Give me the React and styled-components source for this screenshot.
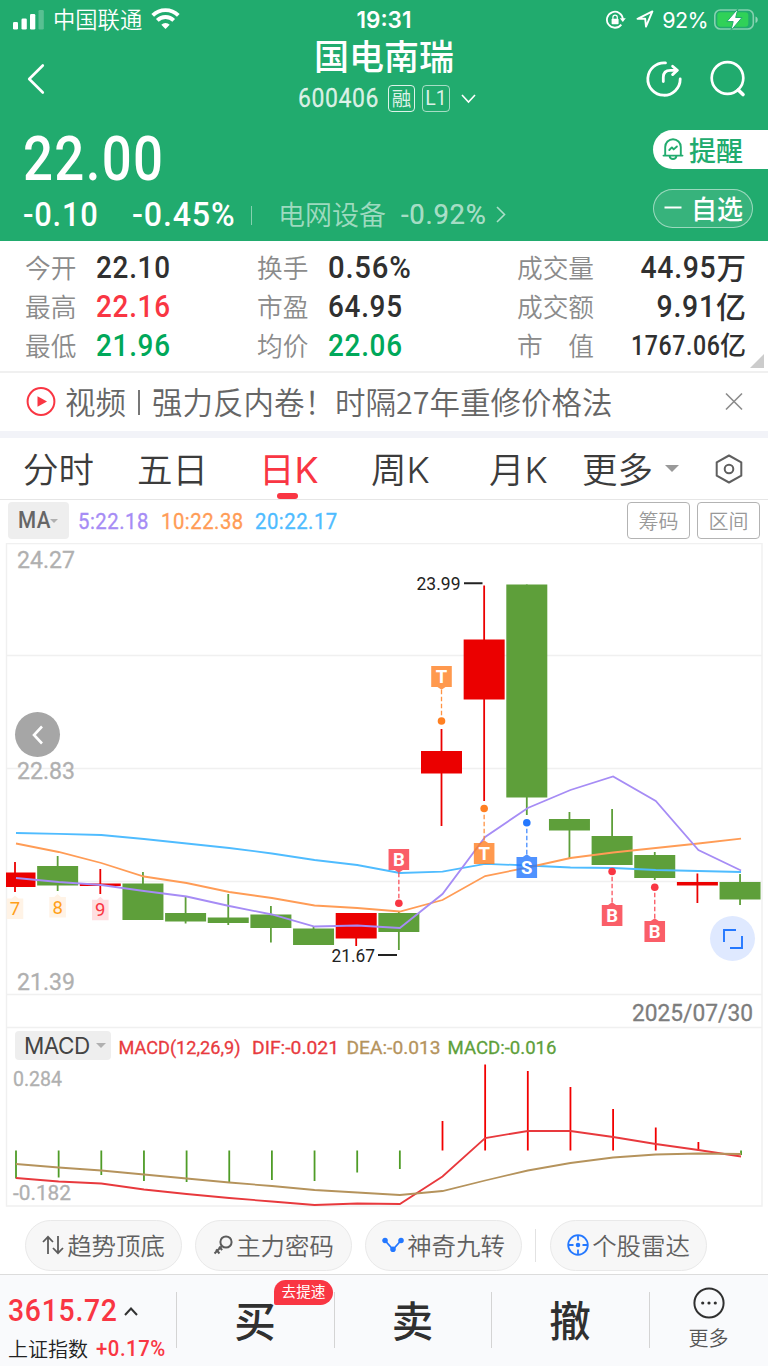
import React from "react";
import styled, { createGlobalStyle } from "styled-components";

const colors = {
  green: "#21ab6e",
  red: "#f93643",
  up: "#eb0000",
  down: "#5e9f3a",
  ink: "#303030",
  gray: "#8b8b8b",
  line: "#f0f0f0",
  purple: "#a68cf5",
  orange: "#ff9c56",
  blue: "#4fbcff",
  tan: "#b5935c",
};

const GlobalStyle = createGlobalStyle`
  * { box-sizing: border-box; }
  body {
    margin: 0;
    background: #fff;
    font-family: "Noto Sans CJK SC", sans-serif;
    -webkit-font-smoothing: antialiased;
  }
  svg { display: block; flex: none; }
`;

const Screen = styled.div`
  width: 768px;
  height: 1366px;
  overflow: hidden;
  display: flex;
  flex-direction: column;
`;

/* narrow DIN style figures */
const Num = styled.span`
  display: block;
  flex: none;
  width: ${(p) => (p.$w ? p.$w + "px" : "auto")};
  font-family: Roboto, "Noto Sans CJK SC", sans-serif;
  font-size: ${(p) => p.$size}px;
  font-weight: ${(p) => p.$weight || 500};
  line-height: 1;
  letter-spacing: 0.026em;
  white-space: nowrap;
  color: ${(p) => p.$color || "inherit"};
  -webkit-text-stroke: ${(p) => p.$stroke || 0}px;
  transform: scaleX(${(p) => p.$sx || 0.9});
  transform-origin: ${(p) => (p.$right ? "right" : "left")} center;
`;

const Header = styled.header`
  height: 241px;
  flex: none;
  background: ${colors.green};
  color: #fff;
`;

const StatusBar = styled.div`
  height: 39px;
  display: grid;
  grid-template-columns: 1fr 62px 1fr;
  align-items: center;
  padding: 0 9px 0 13px;
`;

const StatusSide = styled.div`
  display: flex;
  align-items: center;
  justify-content: ${(p) => (p.$end ? "flex-end" : "flex-start")};
  gap: ${(p) => p.$gap}px;
  font-size: 22.3px;
  font-weight: 350;
  line-height: 36px;
`;

const StatusIcons = styled.div`
  display: flex;
  gap: 10px;
`;

const Carrier = styled.span`
  margin-top: -3px;
`;

const Clock = styled.div`
  margin-left: -4px;
  font: 600 22.5px/38px Inter, sans-serif;
  text-align: center;
`;

const Battery = styled.span`
  margin-left: 2px;
  font: 400 21.5px/38px Inter, sans-serif;
  letter-spacing: -0.6px;
`;

const Nav = styled.div`
  height: 82px;
  display: grid;
  grid-template-columns: 160px 1fr 160px;
`;

const NavIcons = styled.div`
  display: flex;
  align-items: center;
  justify-content: ${(p) => (p.$end ? "flex-end" : "flex-start")};
  gap: 26px;
  padding: 0 ${(p) => (p.$end ? 21 : 27)}px;
  height: 79px;
`;

const Title = styled.h1`
  margin: 0;
  height: 37px;
  font-family: Roboto, "Noto Sans CJK SC", sans-serif;
  font-size: 35px;
  font-weight: 500;
  line-height: 39px;
  text-align: center;
`;

const CodeRow = styled.div`
  display: flex;
  align-items: center;
  height: 45px;
  padding-left: 138px;
`;

const Tag = styled.span`
  width: ${(p) => p.$w}px;
  height: 27px;
  margin-right: 7px;
  border: 1px solid rgba(255, 255, 255, ${(p) => (p.$dim ? 0.6 : 0.85)});
  border-radius: 4px;
  font-size: 19.5px;
  font-family: ${(p) => (p.$dim ? "Roboto" : "Noto Sans CJK SC")}, sans-serif;
  line-height: ${(p) => (p.$dim ? 26 : 24)}px;
  text-align: center;
  color: rgba(255, 255, 255, 0.85);
`;

const Quote = styled.div`
  display: flex;
  justify-content: space-between;
  height: 120px;
`;

const QuoteMain = styled.div`
  padding-left: 23px;
`;

const Price = styled.div`
  display: flex;
  align-items: center;
  height: 77px;
`;

const ChangeRow = styled.div`
  display: flex;
  align-items: center;
  height: 34px;
`;

const Split = styled.i`
  width: 1px;
  height: ${(p) => p.$h}px;
  background: ${(p) => p.$color};
  margin-right: ${(p) => p.$mr || 0}px;
`;

const Sector = styled.span`
  width: 123px;
  font-size: 27px;
  font-weight: 350;
  line-height: 34px;
  margin-top: -2px;
  color: rgba(255, 255, 255, 0.58);
`;

const QuoteActions = styled.div`
  width: 115px;
  padding-top: 9px;
  display: flex;
  flex-direction: column;
  gap: 20px;
`;

const RemindButton = styled.div`
  height: 39px;
  display: flex;
  align-items: center;
  padding-left: 9px;
  gap: 5px;
  border-radius: 20px 0 0 20px;
  background: #fff;
  color: ${colors.green};
  font-size: 27px;
  font-weight: 500;
  line-height: 38px;
`;

const WatchButton = styled.div`
  width: 100px;
  height: 39px;
  display: flex;
  align-items: center;
  padding: 0 0 2px 10px;
  gap: 9px;
  border: 1px solid rgba(255, 255, 255, 0.5);
  border-radius: 20px;
  background: rgba(255, 255, 255, 0.1);
  font-size: 26px;
  font-weight: 500;
  line-height: 36px;
`;

const Stats = styled.section`
  height: 132px;
  flex: none;
  position: relative;
  border-bottom: 2px solid ${colors.line};
  padding: 7px 22px 0 25px;
  display: grid;
  grid-template-columns: 232px 260px 1fr;
  grid-auto-rows: 39px;
`;

const Stat = styled.div`
  display: flex;
  align-items: center;
  justify-content: ${(p) => (p.$spread ? "space-between" : "flex-start")};
`;

const StatLabel = styled.span`
  width: ${(p) => (p.$wide ? 78 : 71)}px;
  font-size: 25.7px;
  font-weight: 350;
  line-height: 38px;
  margin-top: -1px;
  white-space: pre;
  color: ${colors.gray};
`;

const Unit = styled.span`
  display: flex;
  align-items: center;
  font-size: ${(p) => p.$size}px;
  font-weight: 500;
  line-height: 38px;
  color: ${colors.ink};
`;

const UnitMark = styled.span`
  margin-top: -3px;
`;

const Corner = styled.i`
  position: absolute;
  right: 4px;
  bottom: 3px;
  border: 7px solid transparent;
  border-right-color: #ccc;
  border-bottom-color: #ccc;
`;

const News = styled.div`
  height: 58px;
  flex: none;
  display: flex;
  align-items: center;
  padding: 0 24px 0 26px;
`;

const NewsText = styled.div`
  flex: 1;
  display: flex;
  margin-left: 9px;
  font-size: 30.5px;
  font-weight: 350;
  line-height: 56px;
  height: 58px;
  white-space: pre;
  color: #666;
`;

const NewsBar = styled.span`
  width: 26px;
  display: flex;
  align-items: center;
  justify-content: center;
  &::before {
    content: "";
    width: 2px;
    height: 25px;
    background: #777;
  }
`;

const Band = styled.div`
  height: 7px;
  flex: none;
  background: #f2f3f8;
`;

const Tabs = styled.nav`
  height: 62px;
  flex: none;
  display: flex;
  align-items: center;
  padding-left: 23px;
  border-bottom: 1px solid #e6e6e6;
`;

const Tab = styled.div`
  width: ${(p) => p.$w}px;
  height: 61px;
  position: relative;
  font-size: 35.5px;
  font-weight: ${(p) => (p.$active ? 400 : 350)};
  line-height: 59px;
  color: ${(p) => (p.$active ? colors.red : "#3c3c3c")};
`;

const Latin = styled.span`
  font-family: Inter, sans-serif;
  font-size: 36px;
`;

const TabMark = styled.i`
  position: absolute;
  left: 18px;
  bottom: 0;
  width: 21px;
  height: 6px;
  border-radius: 3px;
  background: ${colors.red};
`;

const Caret = styled.i`
  border: ${(p) => p.$s}px solid transparent;
  border-top-color: ${(p) => p.$color || "#b0b0b0"};
  border-bottom: 0;
`;

const MaBar = styled.div`
  height: 43px;
  flex: none;
  display: flex;
  padding: 2px 8px 0;
`;

const MaSelect = styled.div`
  width: 61px;
  height: 37px;
  display: flex;
  align-items: center;
  padding-left: 10px;
  margin-right: 9px;
  border-radius: 4px;
  background: #eee;
`;

const MaValues = styled.div`
  flex: 1;
  display: flex;
  align-items: center;
  height: 39px;
`;

const ToolButton = styled.div`
  width: 63px;
  height: 37px;
  margin-left: 7px;
  border: 1px solid #b3b3b3;
  border-radius: 4px;
  font-size: 20px;
  font-weight: 350;
  line-height: 35px;
  text-align: center;
  color: #999;
`;

const ChartArea = styled.div`
  height: 664px;
  flex: none;
  position: relative;
`;

const RoundButton = styled.div`
  position: absolute;
  left: ${(p) => p.$x}px;
  top: ${(p) => p.$y}px;
  width: 45px;
  height: 45px;
  display: flex;
  align-items: center;
  justify-content: center;
  border-radius: 50%;
  background: ${(p) => p.$bg};
`;

const MacdSelect = styled.div`
  position: absolute;
  left: 15px;
  top: 488px;
  width: 96px;
  height: 29px;
  display: flex;
  align-items: center;
  gap: 6px;
  padding-left: 9px;
  border-radius: 4px;
  background: #eee;
  font: 400 22.5px/29px Inter, sans-serif;
  letter-spacing: -0.5px;
  color: #444;
`;

const Pills = styled.div`
  height: 67px;
  flex: none;
  display: flex;
  align-items: center;
  padding: 9px 0 0 25px;
`;

const Pill = styled.div`
  width: 157px;
  height: 51px;
  margin-right: 13px;
  display: flex;
  align-items: center;
  justify-content: center;
  gap: ${(p) => p.$gap || 3}px;
  border: 1px solid #e9e9e9;
  border-radius: 26px;
  background: #f7f7f7;
  font-size: 24.4px;
  font-weight: 350;
  line-height: 48px;
  color: #606060;
`;

const PillText = styled.span`
  margin-top: -1px;
`;

const Footer = styled.footer`
  height: 92px;
  flex: none;
  display: grid;
  grid-template-columns: 176px 158px 157px 158px 1fr;
  border-top: 1px solid #dcdcdc;
  background: #f9fafc;
`;

const IndexCell = styled.div`
  padding: 18px 0 0 8px;
`;

const IndexRow = styled.div`
  display: flex;
  align-items: center;
  height: ${(p) => p.$h}px;
  color: #222;
`;

const IndexName = styled.span`
  width: 88px;
  font-size: 20px;
  font-weight: 350;
  line-height: 30px;
`;

const FooterCell = styled.div`
  position: relative;
  height: 92px;
  display: flex;
  flex-direction: column;
  align-items: center;
  padding-top: ${(p) => (p.$more ? 11 : 0)}px;
  font-size: ${(p) => (p.$more ? 20 : 41.5)}px;
  font-weight: ${(p) => (p.$more ? 350 : 500)};
  line-height: ${(p) => (p.$more ? 36 : 89)}px;
  color: ${(p) => (p.$more ? "#555" : "#303030")};
  &::before {
    content: "";
    position: absolute;
    left: 0;
    top: 17px;
    width: 1px;
    height: 56px;
    background: #d4d4d4;
  }
`;

const Badge = styled.span`
  position: absolute;
  left: 98px;
  top: 5px;
  width: 59px;
  height: 25px;
  border-radius: 12px 13px 13px 2px;
  background: ${colors.red};
  color: #fff;
  font-size: 14.7px;
  font-weight: 400;
  line-height: 22px;
  text-align: center;
`;

// label, value, colour, horizontal scale, unit, value size, unit size
const stats = [
  ["今开", "22.10", colors.ink, 0.885],
  ["换手", "0.56%", colors.ink, 0.93],
  ["成交量", "44.95", colors.ink, 0.9, "万", 31.5, 29.5],
  ["最高", "22.16", colors.red, 0.885],
  ["市盈", "64.95", colors.ink, 0.885],
  ["成交额", "9.91", colors.ink, 0.9, "亿", 31.5, 30],
  ["最低", "21.96", "#00a85a", 0.885],
  ["均价", "22.06", "#00a85a", 0.885],
  ["市　值", "1767.06", colors.ink, 0.84, "亿", 27.5, 26],
];

// body top, body bottom, high, low, rising
const candles = [
  [872.5, 887, 862, 892, 1],
  [866, 885.5, 856, 891, 0],
  [883.5, 886, 869, 894, 1],
  [883.5, 920, 872, 920, 0],
  [913, 921.5, 897, 923.5, 0],
  [917.5, 923, 894, 925, 0],
  [914.5, 928, 906, 942.5, 0],
  [928.5, 945, 926, 945, 0],
  [913, 938.5, 913, 946, 1],
  [913, 932, 911, 950, 0],
  [751, 773.5, 729, 826, 1],
  [639.5, 699.5, 585.5, 801, 1],
  [584.5, 797.5, 584.5, 815, 0],
  [819, 830.5, 812, 858, 0],
  [836, 865, 809, 865, 0],
  [855, 878, 852, 880, 0],
  [882, 885.5, 873.5, 903, 1],
  [882, 899.5, 874, 905, 0],
];

const ma5 = [878, 882, 885, 891, 896.5, 906, 914.5, 926.5, 925.5, 928, 894, 837, 808, 790, 776.5, 801, 850, 870.5];
const ma10 = [843.5, 852, 863, 876.5, 883, 892, 898, 905.5, 908, 911.5, 900, 876, 867.5, 858, 852.5, 848, 843.5, 838.7];
const ma20 = [833, 833.8, 835, 839, 843.5, 848, 853.5, 860, 865, 873, 871.7, 863.8, 865.5, 867.5, 868, 870, 871, 872];
const dif = [1178, 1181.5, 1183.5, 1189.5, 1194, 1198, 1201.5, 1205, 1203.5, 1204, 1176.5, 1138, 1131, 1131, 1137, 1144, 1150, 1156.5];
const dea = [1164, 1167.5, 1170.5, 1174.5, 1178.5, 1182.5, 1186, 1190, 1192.5, 1195, 1191, 1180.5, 1170.5, 1163, 1157.5, 1154.5, 1153.5, 1154];
const bars = [1178.5, 1177.5, 1175, 1181, 1182, 1182, 1180, 1181, 1172.5, 1169, 1121, 1064.5, 1071, 1087, 1109, 1127.5, 1142, 1155];

// candle index, letter, box top, dot y, colour
const markers = [
  [9, "B", 849, 903.3, "#f93643"],
  [10, "T", 666, 721, "#ff8022"],
  [11, "T", 843, 808.5, "#ff8022"],
  [12, "S", 857, 822.7, "#2478ff"],
  [14, "B", 905, 871.5, "#f93643"],
  [15, "B", 921, 887.3, "#f93643"],
];

const step = 42.65;
const points = (ys) => ys.map((y, i) => `${16 + i * step},${y}`).join(" ");

const Label = ({ x, y, w, size, fill, weight = 400, stroke = 0.3, children }) => (
  <text
    x={x}
    y={y}
    textLength={w}
    lengthAdjust="spacingAndGlyphs"
    fontFamily="Roboto, sans-serif"
    fontSize={size}
    fontWeight={weight}
    fill={fill}
    stroke={fill}
    strokeWidth={stroke}
  >
    {children}
  </text>
);

const Marker = ({ index, letter, top, dot, color }) => {
  const x = 15 + index * step;
  const down = dot > top;
  const base = down ? top + 21 : top;
  const tip = down ? base + 2.8 : base - 2.8;
  return (
    <g fill={color}>
      <path
        d={`M${x} ${tip}V${down ? dot - 4 : dot + 4}`}
        stroke={color}
        strokeDasharray="4.5 2.5"
        strokeOpacity="0.85"
        strokeWidth="1.3"
      />
      <circle cx={x} cy={dot} r="3.8" />
      <g opacity="0.8">
        <path d={`M${x - 10.3} ${top}h20.6v21h-20.6z`} />
        <path d={`M${x - 4} ${base}L${x} ${tip}L${x + 4} ${base}z`} />
      </g>
      <text
        x={x}
        y={top + 17}
        fill="#fff"
        fontFamily="Roboto, sans-serif"
        fontSize="18.5"
        fontWeight="700"
        textAnchor="middle"
      >
        {letter}
      </text>
    </g>
  );
};

const CountTag = ({ x, y, hot, children }) => (
  <g>
    <path d={`M${x - 8.3} ${y}h5l3.3 -3l3.3 3h5v20.5h-16.6z`} fill={hot ? "#ffdfe1" : "#fff3e6"} />
    <text
      x={x}
      y={y + 16.5}
      fill={hot ? "#f93643" : "#ffa019"}
      fontFamily="Roboto, sans-serif"
      fontSize="18.5"
      textAnchor="middle"
    >
      {children}
    </text>
  </g>
);

const Chart = () => (
  <svg width="768" height="664" viewBox="0 543 768 664" fill="none">
    <path
      d="M6.5 543.5H762V1206H6.5zM7 655.5H762M7 768.5H762M7 881.5H762M7 994.5H762M7 1027.5H762"
      stroke="#f0f0f0"
      strokeWidth="1.4"
    />
    <Label x={17} y={568} w={58} size={24} fill="#b0b0b0">24.27</Label>
    <Label x={17} y={779} w={58} size={24} fill="#b0b0b0">22.83</Label>
    <Label x={17} y={989.5} w={58} size={24} fill="#b0b0b0">21.39</Label>
    <Label x={632} y={1021} w={121} size={24} fill="#7d7d7d">2025/07/30</Label>

    {candles.map(([top, bottom, high, low, up], i) => {
      const x = 15 + i * step;
      const left = Math.max(x - 20.5, 6);
      const fill = up ? colors.up : colors.down;
      return (
        <g key={i}>
          <path d={`M${x} ${high}V${low}`} stroke={fill} strokeWidth="1.8" />
          <rect x={left} y={top} width={x + 20.5 - left} height={bottom - top} fill={fill} />
        </g>
      );
    })}

    <CountTag x={15} y={898.5}>7</CountTag>
    <CountTag x={57.6} y={897}>8</CountTag>
    <CountTag x={100.3} y={899.7} hot>9</CountTag>

    <polyline points={points(ma20)} stroke={colors.blue} strokeWidth="1.8" />
    <polyline points={points(ma10)} stroke={colors.orange} strokeWidth="1.8" />
    <polyline points={points(ma5)} stroke={colors.purple} strokeWidth="1.8" />

    {markers.map(([index, letter, top, dot, color]) => (
      <Marker key={index} index={index} letter={letter} top={top} dot={dot} color={color} />
    ))}

    <Label x={416.5} y={590} w={44} size={19} stroke={0} fill="#222">23.99</Label>
    <Label x={331.5} y={962} w={43.5} size={19} stroke={0} fill="#222">21.67</Label>
    <path d="M464 583.2h18.5M378 955h19" stroke="#222" strokeWidth="2" />

    <Label x={118.5} y={1054} w={122} size={19} fill="#e83a3e">MACD(12,26,9)</Label>
    <Label x={252} y={1054} w={87} size={19} fill="#e83a3e">DIF:-0.021</Label>
    <Label x={346.5} y={1054} w={94} size={19} fill={colors.tan}>DEA:-0.013</Label>
    <Label x={447.5} y={1054} w={109} size={19} fill={colors.down}>MACD:-0.016</Label>
    <Label x={13} y={1086} w={49} size={20} fill="#b0b0b0">0.284</Label>
    <Label x={13} y={1200} w={58} size={20} fill="#b0b0b0">-0.182</Label>

    {bars.map((y, i) => (
      <path
        key={i}
        d={`M${16 + i * step} 1150.5V${y}`}
        stroke={y < 1150 ? "#f20000" : "#4f9c27"}
        strokeWidth="1.8"
      />
    ))}
    <polyline points={points(dif)} stroke="#e8393d" strokeWidth="1.8" />
    <polyline points={points(dea)} stroke={colors.tan} strokeWidth="1.8" />
  </svg>
);

const SignalIcon = () => (
  <svg width="31" height="20" viewBox="0 0 31 20" fill="#fff">
    <rect x="0" y="12" width="5" height="7.5" rx="1.3" />
    <rect x="8.5" y="8.5" width="5.3" height="11" rx="1.3" />
    <rect x="17" y="4" width="5.3" height="15.5" rx="1.3" />
    <rect x="25.5" y="0" width="5.3" height="19.5" rx="1.3" opacity="0.25" />
  </svg>
);

const WifiIcon = () => (
  <svg width="29" height="24" viewBox="0 0 29 24" fill="none" stroke="#fff" strokeWidth="3.8">
    <path d="M1.7 7.4a18.1 18.1 0 0 1 25.6 0" />
    <path d="M6.3 12.4a11.6 11.6 0 0 1 16.4 0" />
    <path d="M14.5 21l-4.2 -4.2a5.9 5.9 0 0 1 8.4 0z" fill="#fff" stroke="none" />
  </svg>
);

const LockIcon = () => (
  <svg width="20" height="20" viewBox="0 0 20 20" fill="none">
    <path d="M15.3 14.6A8 8 0 1 1 16.9 9" stroke="#fff" strokeWidth="1.8" />
    <path d="M13.8 8.3h6l-3 3.8z" fill="#fff" />
    <rect x="5.6" y="8.8" width="7" height="5.4" rx="0.8" fill="#fff" />
    <path d="M6.9 9V7.4a2.2 2.2 0 0 1 4.4 0V9" stroke="#fff" strokeWidth="1.2" />
  </svg>
);

const LocationIcon = () => (
  <svg width="18" height="18" viewBox="0 0 18 18" fill="none" stroke="#fff" strokeWidth="1.9" strokeLinejoin="round">
    <path d="M1.5 8.8L16.4 1.4L10 16.6L9.2 8.8z" />
  </svg>
);

const BatteryIcon = () => (
  <svg width="45" height="24" viewBox="0 0 45 24">
    <rect x="0.8" y="2" width="38.5" height="19" rx="5.5" fill="none" stroke="#fff" strokeOpacity="0.45" strokeWidth="1.6" />
    <rect x="3.3" y="4.3" width="31" height="14.4" rx="3.2" fill="#30d158" />
    <path d="M41.5 8.5c3 .8 3 5.6 0 6.4z" fill="#fff" opacity="0.5" />
    <path d="M24 0.6L12.8 13.6h6.4L16.8 22.8L28 9.5h-6.3z" fill="#fff" stroke="#21ab6e" strokeWidth="1" />
  </svg>
);

const BackIcon = () => (
  <svg width="18" height="32" viewBox="0 0 18 32" fill="none" stroke="#fff" strokeWidth="2.6" strokeLinecap="round" strokeLinejoin="round">
    <path d="M15.8 2.5L2.2 16L15.8 29.5" />
  </svg>
);

const ShareIcon = () => (
  <svg width="38" height="38" viewBox="0 0 38 38" fill="none" stroke="#fff" strokeWidth="2.8" strokeLinecap="round" strokeLinejoin="round">
    <path d="M20.5 2.9A16.2 16.2 0 1 0 35.2 19" />
    <path d="M18.3 21.5v-4.2c0-4.5 2.6-7 7.2-7H32" />
    <path d="M27.6 6.2L32.3 10.3L27.6 14.6" />
  </svg>
);

const SearchIcon = () => (
  <svg width="38" height="38" viewBox="0 0 38 38" fill="none" stroke="#fff" strokeLinecap="round">
    <circle cx="18.5" cy="18" r="15.8" strokeWidth="2.7" />
    <path d="M29.3 30L34 34.5" strokeWidth="3.6" />
  </svg>
);

const BellIcon = () => (
  <svg width="22" height="24" viewBox="0 0 22 24" fill="none" stroke={colors.green} strokeWidth="1.9" strokeLinecap="round" strokeLinejoin="round">
    <path d="M1.5 17.6h19M3.2 17.4V9a7.8 7.8 0 0 1 15.6 0v8.4M7.6 18.4c.6 3.4 6.2 3.4 6.8 0" />
    <path d="M7.3 12l2.6-2.6 1.8 2 3.2-2.9" />
  </svg>
);

const Chevron = ({ w, h, d, color = "#fff", sw = 1.6, ml = 0 }) => (
  <svg width={w + ml} height={h} viewBox={`${-ml} 0 ${w + ml} ${h}`} fill="none" stroke={color} strokeWidth={sw}>
    <path d={d} />
  </svg>
);

const App = () => {
  return (
    <Screen>
      <GlobalStyle />
      <Header>
        <StatusBar>
          <StatusSide $gap={9}>
            <SignalIcon />
            <Carrier>中国联通</Carrier>
            <WifiIcon />
          </StatusSide>
          <Clock>19:31</Clock>
          <StatusSide $end $gap={6}>
            <StatusIcons>
              <LockIcon />
              <LocationIcon />
            </StatusIcons>
            <Battery>92%</Battery>
            <BatteryIcon />
          </StatusSide>
        </StatusBar>
        <Nav>
          <NavIcons>
            <BackIcon />
          </NavIcons>
          <div>
            <Title>国电南瑞</Title>
            <CodeRow>
              <Num $size={25.5} $w={90} $weight={400} $stroke={0.3} $color="rgba(255,255,255,.82)">600406</Num>
              <Tag $w={27}>融</Tag>
              <Tag $w={28} $dim>L1</Tag>
              <Chevron w={15} h={10} ml={4} d="M1 1L7.5 8L14 1" />
            </CodeRow>
          </div>
          <NavIcons $end>
            <ShareIcon />
            <SearchIcon />
          </NavIcons>
        </Nav>
        <Quote>
          <QuoteMain>
            <Price>
              <Num $size={61} $sx={0.865}>22.00</Num>
            </Price>
            <ChangeRow>
              <Num $size={33.5} $w={109} $sx={0.92}>-0.10</Num>
              <Num $size={33.5} $w={119} $sx={0.96}>-0.45%</Num>
              <Split $h={19} $color="rgba(255,255,255,.45)" $mr={26} />
              <Sector>电网设备</Sector>
              <Num $size={28} $w={95} $weight={400} $stroke={0.2} $sx={0.98} $color="rgba(255,255,255,.62)">-0.92%</Num>
              <Chevron w={10} h={18} color="rgba(255,255,255,.62)" d="M1 1L8.5 8.5L1 16" />
            </ChangeRow>
          </QuoteMain>
          <QuoteActions>
            <RemindButton>
              <BellIcon />
              提醒
            </RemindButton>
            <WatchButton>
              <Chevron w={18} h={3} sw={2} d="M0.5 1.5H17.5" />
              自选
            </WatchButton>
          </QuoteActions>
        </Quote>
      </Header>

      <Stats>
        {stats.map(([label, value, color, sx, unit, size, unitSize]) => (
          <Stat key={label} $spread={!!unit}>
            <StatLabel $wide={!!unit}>{label}</StatLabel>
            {unit ? (
              <Unit $size={unitSize}>
                <Num $size={size} $sx={sx} $right>{value}</Num>
                <UnitMark>{unit}</UnitMark>
              </Unit>
            ) : (
              <Num $size={31.5} $sx={sx} $color={color}>{value}</Num>
            )}
          </Stat>
        ))}
        <Corner />
      </Stats>

      <News>
        <svg width="30" height="30" viewBox="0 0 30 30" fill="none">
          <circle cx="15" cy="14.5" r="13.4" stroke={colors.red} strokeWidth="2" />
          <path d="M11.5 9.2L21 14.5L11.5 19.8z" fill={colors.red} />
        </svg>
        <NewsText>
          视频
          <NewsBar />
          强力反内卷！时隔27年重修价格法
        </NewsText>
        <svg width="20" height="20" viewBox="0 0 20 20" stroke="#8b8b8b" strokeWidth="1.6">
          <path d="M2 1.5L18 17.5M18 1.5L2 17.5" />
        </svg>
      </News>
      <Band />

      <Tabs>
        <Tab $w={114}>分时</Tab>
        <Tab $w={122}>五日</Tab>
        <Tab $w={112} $active>
          日<Latin>K</Latin>
          <TabMark />
        </Tab>
        <Tab $w={118}>周<Latin>K</Latin></Tab>
        <Tab $w={93}>月<Latin>K</Latin></Tab>
        <Tab $w={83}>更多</Tab>
        <Caret $s={7} $color="#999" />
        <svg width="66" height="34" viewBox="-36 0 66 34" fill="none" stroke="#5f5f5f" strokeWidth="2" strokeLinejoin="round">
          <path d="M14 3.5L26.3 10.3V23.7L14 30.5L1.7 23.7V10.3z" />
          <circle cx="14" cy="17" r="4.3" />
        </svg>
      </Tabs>

      <MaBar>
        <MaSelect>
          <Num $size={23} $w={32} $color="#666">MA</Num>
          <Caret $s={4.5} />
        </MaSelect>
        <MaValues>
          <Num $size={22.5} $w={83} $weight={400} $stroke={0.35} $color={colors.purple}>5:22.18</Num>
          <Num $size={22.5} $w={94} $weight={400} $stroke={0.35} $color={colors.orange}>10:22.38</Num>
          <Num $size={22.5} $w={94} $weight={400} $stroke={0.35} $color={colors.blue}>20:22.17</Num>
        </MaValues>
        <ToolButton>筹码</ToolButton>
        <ToolButton>区间</ToolButton>
      </MaBar>

      <ChartArea>
        <Chart />
        <RoundButton $x={15} $y={169} $bg="#a6a6a6">
          <Chevron w={14} h={20} sw={2.6} d="M11 1.5L3 10L11 18.5" />
        </RoundButton>
        <RoundButton $x={710} $y={373} $bg="#dfe9ff">
          <svg width="22" height="22" viewBox="0 0 22 22" fill="none" stroke="#2478ff" strokeWidth="1.9">
            <path d="M14 2H2V14M8 20H20V8" />
          </svg>
        </RoundButton>
        <MacdSelect>
          MACD
          <Caret $s={5} />
        </MacdSelect>
      </ChartArea>

      <Pills>
        <Pill>
          <svg width="22" height="20" viewBox="0 0 22 20" fill="none" stroke="#5c5c5c" strokeWidth="1.8">
            <path d="M6 19V2M1 7L6 1.8L11 7M16 1V18M11 13L16 18.2L21 13" />
          </svg>
          <PillText>趋势顶底</PillText>
        </Pill>
        <Pill>
          <svg width="20" height="20" viewBox="0 0 20 20" fill="none" stroke="#5c5c5c" strokeWidth="2">
            <circle cx="13" cy="7" r="5.6" />
            <path d="M9 11L1.5 18.5M3 14.5L6.5 18.5M6 11.8L9.2 15" />
          </svg>
          <PillText>主力密码</PillText>
        </Pill>
        <Pill>
          <svg width="22" height="16" viewBox="0 0 22 16" fill="#2478ff" stroke="#2478ff" strokeWidth="1.8">
            <path d="M3 3.5L11 12.5L19 3.5" fill="none" />
            <circle cx="3" cy="3.5" r="1.9" />
            <circle cx="11" cy="12.3" r="1.9" />
            <circle cx="19" cy="3.5" r="1.9" />
          </svg>
          <PillText>神奇九转</PillText>
        </Pill>
        <Split $h={33} $color="#e2e2e2" $mr={14} />
        <Pill>
          <svg width="22" height="22" viewBox="0 0 22 22" fill="none" stroke="#2478ff" strokeWidth="1.8">
            <circle cx="11" cy="11" r="9.8" />
            <path d="M11 1V6.5M11 15.5V21M1 11H6.5M15.5 11H21" />
            <circle cx="11" cy="11" r="1.4" fill="#2478ff" />
          </svg>
          <PillText>个股雷达</PillText>
        </Pill>
      </Pills>

      <Footer>
        <IndexCell>
          <IndexRow $h={36}>
            <Num $size={31.5} $w={116} $color={colors.red}>3615.72</Num>
            <Chevron w={14} h={9} sw={2} color="#333" d="M1 8L7 1.5L13 8" />
          </IndexRow>
          <IndexRow $h={40}>
            <IndexName>上证指数</IndexName>
            <Num $size={21.5} $sx={0.945} $color={colors.red}>+0.17%</Num>
          </IndexRow>
        </IndexCell>
        <FooterCell>
          买
          <Badge>去提速</Badge>
        </FooterCell>
        <FooterCell>卖</FooterCell>
        <FooterCell>撤</FooterCell>
        <FooterCell $more>
          <svg width="34" height="34" viewBox="0 0 34 34" fill="#303030">
            <circle cx="17" cy="17" r="14.6" fill="none" stroke="#303030" strokeWidth="2" />
            <circle cx="10.7" cy="17" r="1.6" />
            <circle cx="17" cy="17" r="1.6" />
            <circle cx="23.3" cy="17" r="1.6" />
          </svg>
          更多
        </FooterCell>
      </Footer>
    </Screen>
  );
};

export default App;
